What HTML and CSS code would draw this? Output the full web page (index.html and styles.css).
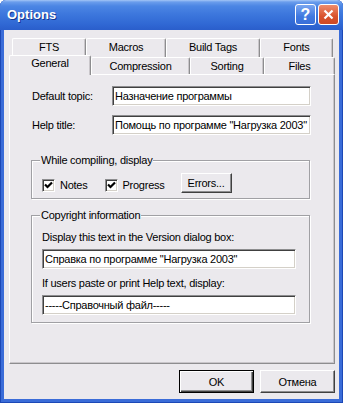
FILE: index.html
```html
<!DOCTYPE html>
<html lang="en">

<head>
    <meta charset="UTF-8" />
    <title>Options</title>
    <link rel="stylesheet" href="styles.css">
</head>

<body>

    <div class="window">
        <div class="titlebar">
            <span class="title">Options</span>
            <div class="title-buttons">
                <span class="tb-btn help">?</span>
                <span class="tb-btn close">
                    <svg width="11" height="11" viewBox="0 0 11 11">
                        <path d="M1.5 1.5 L9.5 9.5 M9.5 1.5 L1.5 9.5" stroke="#fff" stroke-width="2.2" />
                    </svg>
                </span>
            </div>
        </div>

        <div class="client">
            <div class="tabs">
                <div class="tabrow back">
                    <span class="tab t-fts">FTS</span>
                    <span class="tab t-macros">Macros</span>
                    <span class="tab t-build">Build Tags</span>
                    <span class="tab t-fonts">Fonts</span>
                </div>
                <div class="tabrow front">
                    <span class="tab t-general selected">General</span>
                    <span class="tab t-compression">Compression</span>
                    <span class="tab t-sorting">Sorting</span>
                    <span class="tab t-files">Files</span>
                </div>

                <div class="panel">
                    <div class="fields">
                        <label>Default topic:</label>
                        <input type="text" class="textbox wide" value="Назначение программы">
                        <label>Help title:</label>
                        <input type="text" class="textbox wide" value="Помощь по программе &quot;Нагрузка 2003&quot;">
                    </div>

                    <fieldset class="group compile">
                        <legend>While compiling, display</legend>
                        <div class="check-row">
                            <label class="check"><span class="box"><svg width="9" height="9" viewBox="0 0 9 9"><polyline points="1,3.5 3.5,6 8,1.5" fill="none" stroke="#000" stroke-width="2.2" /></svg></span>Notes</label>
                            <label class="check"><span class="box"><svg width="9" height="9" viewBox="0 0 9 9"><polyline points="1,3.5 3.5,6 8,1.5" fill="none" stroke="#000" stroke-width="2.2" /></svg></span>Progress</label>
                            <button class="btn errors">Errors...</button>
                        </div>
                    </fieldset>

                    <fieldset class="group copyright">
                        <legend>Copyright information</legend>
                        <p class="hint">Display this text in the Version dialog box:</p>
                        <input type="text" class="textbox long" value="Справка по программе &quot;Нагрузка 2003&quot;">
                        <p class="hint second">If users paste or print Help text, display:</p>
                        <input type="text" class="textbox long" value="-----Справочный файл-----">
                    </fieldset>
                </div>
            </div>

            <div class="dialog-buttons">
                <button class="btn default">OK</button>
                <button class="btn">Отмена</button>
            </div>
        </div>
    </div>

</body>

</html>
```

FILE: styles.css
```css
* {
    box-sizing: border-box;
}

body {
    margin: 0;
    font-family: "Liberation Sans", Arial, sans-serif;
    font-size: 11px;
    letter-spacing: -0.25px;
    color: #000;
    background: #fff;
}

.window {
    width: 343px;
    height: 403px;
    display: flex;
    flex-direction: column;
    padding: 0 4px 4px;
    background: #3a6cd8;
    box-shadow: inset 1px 0 #1c48b6, inset -1px 0 #1c48b6, inset 0 -1px #1c48b6;
    border-radius: 6px 6px 0 0;
    overflow: hidden;
}

/* title bar */
.titlebar {
    height: 30px;
    margin: 0 -4px;
    display: flex;
    align-items: center;
    justify-content: space-between;
    padding: 0 4px 0 7px;
    background: linear-gradient(to bottom, #a4c6f6 0, #6a9dec 2px, #4c86e4 6px, #3d77dd 14px, #3068d4 24px, #2a5ecb 30px);
}

.title {
    color: #fff;
    font-weight: bold;
    font-size: 13px;
    letter-spacing: 0;
    text-shadow: 1px 1px #17378f;
    padding-bottom: 1px;
}

.title-buttons {
    display: flex;
    gap: 2px;
    padding-bottom: 1px;
}

.tb-btn {
    width: 21px;
    height: 21px;
    border: 1px solid #fff;
    border-radius: 3px;
    display: flex;
    align-items: center;
    justify-content: center;
    color: #fff;
    font-weight: bold;
    font-size: 16px;
    letter-spacing: 0;
}

.tb-btn.help {
    background: linear-gradient(to bottom, #7aa6f0, #3f78e0 60%, #3a6fd8);
}

.tb-btn.close {
    background: linear-gradient(to bottom, #ee8c6c, #d9532d 60%, #cd4a25);
}

/* client area */
.client {
    flex: 1;
    display: flex;
    flex-direction: column;
    background: #ebe9ed;
    padding: 8px 4px 6px 5px;
}

.tabs {
    display: flex;
    flex-direction: column;
}

.tabrow {
    display: flex;
    align-items: flex-start;
}

.tabrow.back {
    height: 19px;
    padding-left: 3px;
}

.tabrow.front {
    height: 17px;
}

.tab {
    height: 100%;
    text-align: center;
    line-height: 16px;
    background: #ebe9ed;
    border-top: 1px solid #fff;
    border-left: 1px solid #fff;
    border-right: 1px solid #8d8d8f;
    box-shadow: inset -1px 0 #c9c6ca;
    border-radius: 2px 2px 0 0;
}

.t-fts { width: 74px; }
.t-macros { width: 80px; }
.t-build { width: 94px; }
.t-fonts { width: 73px; }

.t-general { width: 82px; }
.t-compression { width: 99px; }
.t-sorting { width: 74px; }
.t-files { width: 71px; }

.tab.selected {
    position: relative;
    z-index: 1;
    height: 20px;
    margin-top: -2px;
    line-height: 15px;
    padding-bottom: 3px;
}

.panel {
    height: 290px;
    border-top: 1px solid #fff;
    border-left: 1px solid #fff;
    border-right: 1px solid #8d8d8f;
    border-bottom: 1px solid #8d8d8f;
    box-shadow: inset -1px -1px #c9c6ca;
    padding: 11px 0 0 22px;
}

.fields {
    display: grid;
    grid-template-columns: 80px 199px;
    row-gap: 9px;
    align-items: center;
}

.textbox {
    height: 20px;
    margin: 0;
    padding: 0 2px;
    font-family: inherit;
    font-size: 11px;
    letter-spacing: -0.25px;
    color: #000;
    background: #fff;
    border: 1px solid;
    border-color: #8d8d8f #fff #fff #8d8d8f;
    box-shadow: inset 1px 1px #404040, inset -1px -1px #d4d0c8;
    outline: none;
}

.textbox.wide {
    width: 199px;
}

.textbox.long {
    display: block;
    width: 254px;
}

/* group boxes */
.group {
    width: 279px;
    margin: 0 0 0 -1px;
    border: 1px solid #a0a0a4;
    box-shadow: inset 1px 1px #fff, 1px 1px #fff;
    padding: 0 8px 0 10px;
}

.group legend {
    padding: 0 1px;
    margin-left: -2px;
    line-height: 13px;
    background: #ebe9ed;
}

.group.compile {
    margin-top: 19px;
    padding-top: 6px;
    padding-bottom: 5px;
}

.group.copyright {
    margin-top: 10px;
    padding-top: 9px;
    padding-bottom: 7px;
}

.check-row {
    display: flex;
    align-items: center;
    gap: 17px;
}

.check {
    display: flex;
    align-items: center;
    gap: 5px;
    padding-top: 4px;
}

.box {
    width: 13px;
    height: 13px;
    display: flex;
    align-items: center;
    justify-content: center;
    background: #fff;
    border: 1px solid;
    border-color: #8d8d8f #fff #fff #8d8d8f;
    box-shadow: inset 1px 1px #404040, inset -1px -1px #d4d0c8;
}

.hint {
    margin: 0;
    line-height: 13px;
    margin-bottom: 5px;
}

.hint.second {
    margin-top: 8px;
}

/* buttons */
.btn {
    height: 23px;
    width: 75px;
    padding: 0;
    font-family: inherit;
    font-size: 11px;
    letter-spacing: -0.25px;
    color: #000;
    background: #ebe9ed;
    border: 1px solid;
    border-color: #fff #404040 #404040 #fff;
    box-shadow: inset -1px -1px #8d8d8f;
}

.btn.errors {
    width: 51px;
    height: 20px;
    margin-left: -1px;
}

.btn.default {
    border: 1px solid #000;
    box-shadow: inset 1px 1px #fff, inset -1px -1px #404040, inset -2px -2px #8d8d8f;
}

.dialog-buttons {
    display: flex;
    justify-content: flex-end;
    gap: 6px;
    margin-top: 6px;
}
```
